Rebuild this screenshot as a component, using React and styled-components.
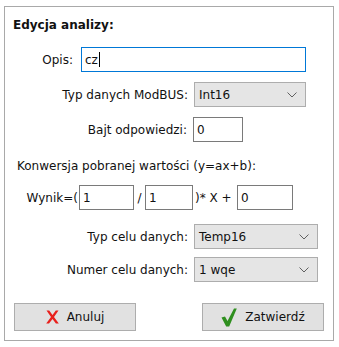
import React from "react"
import styled, { createGlobalStyle } from "styled-components"

const Global = createGlobalStyle`
  html, body {
    margin: 0;
    background: #fff;
  }
  body {
    font-family: "DejaVu Sans", "Liberation Sans", sans-serif;
    font-size: 12px;
    color: #111;
  }
`

const Frame = styled.div`
  margin: 6px 0 0 4px;
  width: 330px;
  height: 335px;
  box-sizing: border-box;
  border: 1px solid #a9a9a9;
  display: flex;
  flex-direction: column;
`

const Title = styled.div`
  margin: 10px 0 0 8px;
  font-weight: bold;
  line-height: 16px;
`

const Row = styled.div`
  display: flex;
  align-items: center;
  height: 25px;
  margin-top: ${(p) => p.$mt}px;
  padding-left: ${(p) => p.$pl || 0}px;
`

const Label = styled.div`
  width: ${(p) => p.$w}px;
  box-sizing: border-box;
  padding-right: ${(p) => (p.$pr === undefined ? 6 : p.$pr)}px;
  text-align: right;
  white-space: nowrap;
`

const Text = styled.div`
  width: ${(p) => p.$w}px;
  padding-left: ${(p) => p.$pl || 0}px;
  box-sizing: border-box;
  text-align: ${(p) => p.$align || "left"};
  white-space: nowrap;
`

const Field = styled.div`
  width: ${(p) => p.$w}px;
  height: 25px;
  box-sizing: border-box;
  border: 1px solid ${(p) => (p.$focus ? "#0078d7" : "#7a7a7a")};
  background: #fff;
  padding-left: 3px;
  display: flex;
  align-items: center;
`

const Caret = styled.span`
  display: inline-block;
  width: 1px;
  height: 15px;
  background: #000;
  margin-left: 1px;
`

const Combo = styled.div`
  width: ${(p) => p.$w}px;
  height: 25px;
  box-sizing: border-box;
  border: 1px solid #adadad;
  background: #e5e5e5;
  padding: 0 8px 0 4px;
  display: flex;
  align-items: center;
  justify-content: space-between;
`

const Buttons = styled.div`
  display: flex;
  justify-content: space-between;
  margin-top: 21px;
  padding: 0 9px;
`

const Button = styled.button`
  width: 122px;
  height: 28px;
  box-sizing: border-box;
  border: 1px solid #adadad;
  background: #e1e1e1;
  font: inherit;
  color: #111;
  display: flex;
  align-items: center;
  justify-content: center;
  gap: 8px;
  padding: 0;
`

function Chevron() {
  return (
    <svg width="10" height="6" viewBox="0 0 10 6">
      <path d="M0.5 0.5 L5 5 L9.5 0.5" fill="none" stroke="#606060" strokeWidth="1" />
    </svg>
  )
}

function Select({ w, children }) {
  return (
    <Combo $w={w}>
      <span>{children}</span>
      <Chevron />
    </Combo>
  )
}

function CrossIcon() {
  return (
    <svg width="13" height="14" viewBox="0 0 13 14">
      <polygon points="0.5,0.5 3.2,0.5 6.5,5 9.8,0.5 12.5,0.5 8,7 12.8,13.5 9.9,13.5 6.5,9 3,13.5 0.2,13.5 5,7" fill="#e8201c" />
    </svg>
  )
}

function CheckIcon() {
  return (
    <svg width="16" height="19" viewBox="0 0 16 19">
      <polygon points="0.5,9.5 4,8.5 6.5,13 13,0.5 15.8,0.5 8.2,18.5 5.2,18.5" fill="#2f8f1f" />
    </svg>
  )
}

export default function App() {
  return (
    <>
      <Global />
      <Frame>
        <Title>Edycja analizy:</Title>

        <Row $mt={14}>
          <Label $w={76} $pr={8}>Opis:</Label>
          <Field $w={225} $focus>cz<Caret /></Field>
        </Row>

        <Row $mt={10}>
          <Label $w={189}>Typ danych ModBUS:</Label>
          <Select w={112}>Int16</Select>
        </Row>

        <Row $mt={10}>
          <Label $w={188}>Bajt odpowiedzi:</Label>
          <Field $w={50}>0</Field>
        </Row>

        <Row $mt={11} $pl={12}>Konwersja pobranej wartości (y=ax+b):</Row>

        <Row $mt={7}>
          <Label $w={74} $pr={1}>Wynik=(</Label>
          <Field $w={55}>1</Field>
          <Text $w={11} $align="center">/</Text>
          <Field $w={48}>1</Field>
          <Text $w={44} $pl={2}>)* X +</Text>
          <Field $w={56}>0</Field>
        </Row>

        <Row $mt={14}>
          <Label $w={189}>Typ celu danych:</Label>
          <Select w={124}>Temp16</Select>
        </Row>

        <Row $mt={8}>
          <Label $w={189}>Numer celu danych:</Label>
          <Select w={124}>1 wqe</Select>
        </Row>

        <Buttons>
          <Button>
            <CrossIcon />
            Anuluj
          </Button>
          <Button>
            <CheckIcon />
            Zatwierdź
          </Button>
        </Buttons>
      </Frame>
    </>
  )
}
